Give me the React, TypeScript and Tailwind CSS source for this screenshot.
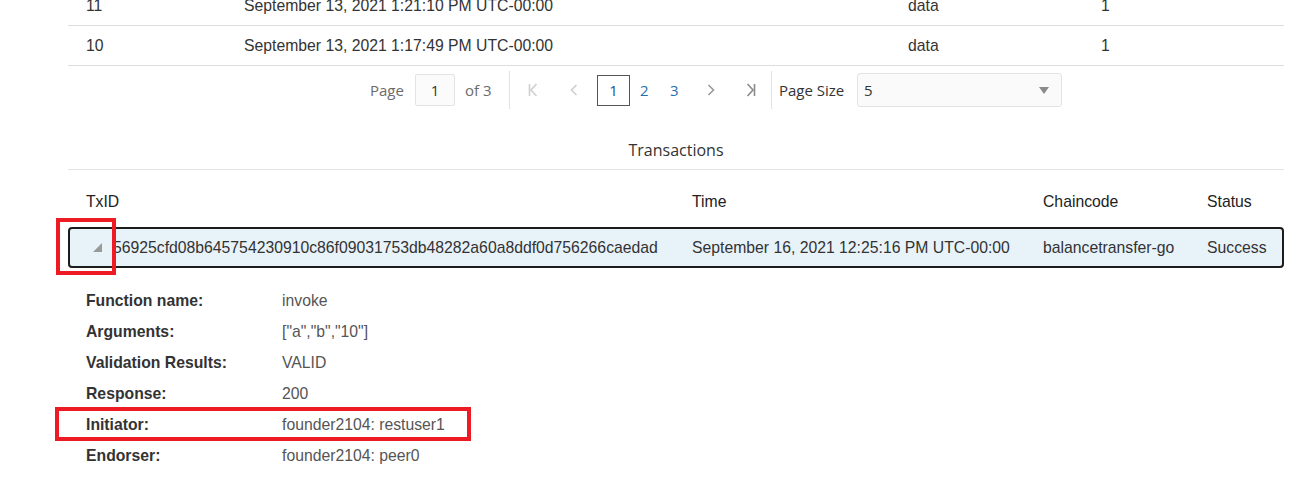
import React from "react";

const sans = { fontFamily: '"Liberation Sans", Arial, sans-serif' };
const open = { fontFamily: '"Open Sans", "Noto Sans", sans-serif' };

function FirstIcon({ color }: { color: string }) {
  return (
    <svg width="10" height="14" viewBox="0 0 10 14" fill="none" stroke={color} strokeWidth="1.6">
      <line x1="1.5" y1="1" x2="1.5" y2="13" />
      <polyline points="8.5,1 3,7 8.5,13" />
    </svg>
  );
}
function LastIcon({ color }: { color: string }) {
  return (
    <svg width="10" height="14" viewBox="0 0 10 14" fill="none" stroke={color} strokeWidth="1.6">
      <line x1="8.5" y1="1" x2="8.5" y2="13" />
      <polyline points="1.5,1 7,7 1.5,13" />
    </svg>
  );
}
function PrevIcon({ color }: { color: string }) {
  return (
    <svg width="8" height="14" viewBox="0 0 8 14" fill="none" stroke={color} strokeWidth="1.6">
      <polyline points="6.5,2 1.5,7 6.5,12" />
    </svg>
  );
}
function NextIcon({ color }: { color: string }) {
  return (
    <svg width="8" height="14" viewBox="0 0 8 14" fill="none" stroke={color} strokeWidth="1.6">
      <polyline points="1.5,2 6.5,7 1.5,12" />
    </svg>
  );
}

const details: [string, string][] = [
  ["Function name:", "invoke"],
  ["Arguments:", '["a","b","10"]'],
  ["Validation Results:", "VALID"],
  ["Response:", "200"],
  ["Initiator:", "founder2104: restuser1"],
  ["Endorser:", "founder2104: peer0"],
];

export default function App() {
  return (
    <div className="relative w-[1306px] h-[496px] overflow-hidden bg-white text-[#333]" style={sans}>
      <div className="ml-[68px] w-[1216px] -mt-[14px]">
        {/* Blocks table rows */}
        <div className="text-[15.75px] leading-[18px] text-[#333]">
          {[
            ["11", "September 13, 2021 1:21:10 PM UTC-00:00"],
            ["10", "September 13, 2021 1:17:49 PM UTC-00:00"],
          ].map(([n, t]) => (
            <div key={n} className="flex h-[40px] items-center border-b border-[#dedede]">
              <div className="w-[176px] pl-[18px]">{n}</div>
              <div className="w-[664px]">{t}</div>
              <div className="w-[193px]">data</div>
              <div className="flex-1">1</div>
            </div>
          ))}
        </div>

        {/* Pagination */}
        <div className="flex items-center pt-[7px] h-[41px] text-[15px]" style={open}>
          <div className="ml-[302px] w-[33px] text-[#6b6b6b]">Page</div>
          <div className="ml-[12px] w-[40px] h-[32px] border border-[#e3e3e3] rounded-[2px] bg-[#fbfbfb] flex items-center justify-center text-[#333]">
            1
          </div>
          <div className="ml-[10px] w-[30px] text-[#6b6b6b]">of 3</div>
          <div className="ml-[14px] w-px h-[38px] bg-[#e2e2e2]" />
          <div className="ml-[18px] w-[10px] flex items-center">
            <FirstIcon color="#cfcfcf" />
          </div>
          <div className="ml-[32px] w-[8px] flex items-center">
            <PrevIcon color="#cfcfcf" />
          </div>
          <div className="ml-[19px] w-[33px] h-[31px] border border-[#555] flex items-center justify-center text-[#1d5585]">
            1
          </div>
          <div className="ml-[10px] w-[9px] text-[#1f6fb2]">2</div>
          <div className="ml-[21px] w-[9px] text-[#1f6fb2]">3</div>
          <div className="ml-[28px] w-[8px] flex items-center">
            <NextIcon color="#9a9a9a" />
          </div>
          <div className="ml-[31px] w-[10px] flex items-center">
            <LastIcon color="#8a8a8a" />
          </div>
          <div className="ml-[15px] w-px h-[38px] bg-[#e2e2e2]" />
          <div className="ml-[7px] w-[66px] text-[#333]">Page Size</div>
          <div className="ml-[12px] w-[205px] h-[34px] border border-[#e3e3e3] rounded-[3px] bg-[#fafafa] flex items-center justify-between pl-[6px] pr-[12px] text-[#333]">
            <span>5</span>
            <svg width="10" height="7" viewBox="0 0 10 7">
              <polygon points="0,0 10,0 5,7" fill="#8a8a8a" />
            </svg>
          </div>
        </div>

        {/* Transactions heading */}
        <div
          className="mt-[31px] h-[32px] flex items-start justify-center border-b border-[#e4e4e4] text-[16px] leading-[24px] text-[#333]"
          style={open}
        >
          <span>Transactions</span>
        </div>

        {/* Header */}
        <div className="mt-[22px] flex text-[15.75px] leading-[20px] text-[#222]">
          <div className="w-[624px] pl-[18px]">TxID</div>
          <div className="w-[351px]">Time</div>
          <div className="w-[164px]">Chaincode</div>
          <div className="flex-1">Status</div>
        </div>

        {/* Selected row */}
        <div className="mt-[15px] h-[41px] flex items-center border-2 border-[#1c1c1c] rounded-[4px] bg-[#e8f2f9] text-[15.75px] leading-[20px] text-[#333]">
          <div className="w-[43px] flex justify-end pr-[11px]">
            <svg width="9" height="9" viewBox="0 0 9 9">
              <polygon points="9,0 9,9 0,9" fill="#9a9a9a" />
            </svg>
          </div>
          <div className="w-[579px] whitespace-nowrap overflow-hidden">
            56925cfd08b645754230910c86f09031753db48282a60a8ddf0d756266caedad
          </div>
          <div className="w-[351px]">September 16, 2021 12:25:16 PM UTC-00:00</div>
          <div className="w-[164px]">balancetransfer-go</div>
          <div className="flex-1">Success</div>
        </div>

        {/* Details */}
        <div className="mt-[17px] text-[15.75px]">
          {details.map(([k, v]) => (
            <div key={k} className="flex h-[31px] items-center">
              <div className="w-[214px] pl-[18px] font-bold text-[#333]">{k}</div>
              <div className="text-[#555]">{v}</div>
            </div>
          ))}
        </div>
      </div>

      {/* Annotation overlays */}
      <div className="absolute left-[56px] top-[218px] w-[60px] h-[57px] border-[4px] border-[#ed1c24]" />
      <div className="absolute left-[55px] top-[407px] w-[416px] h-[34px] border-[4px] border-[#ed1c24]" />
    </div>
  );
}
